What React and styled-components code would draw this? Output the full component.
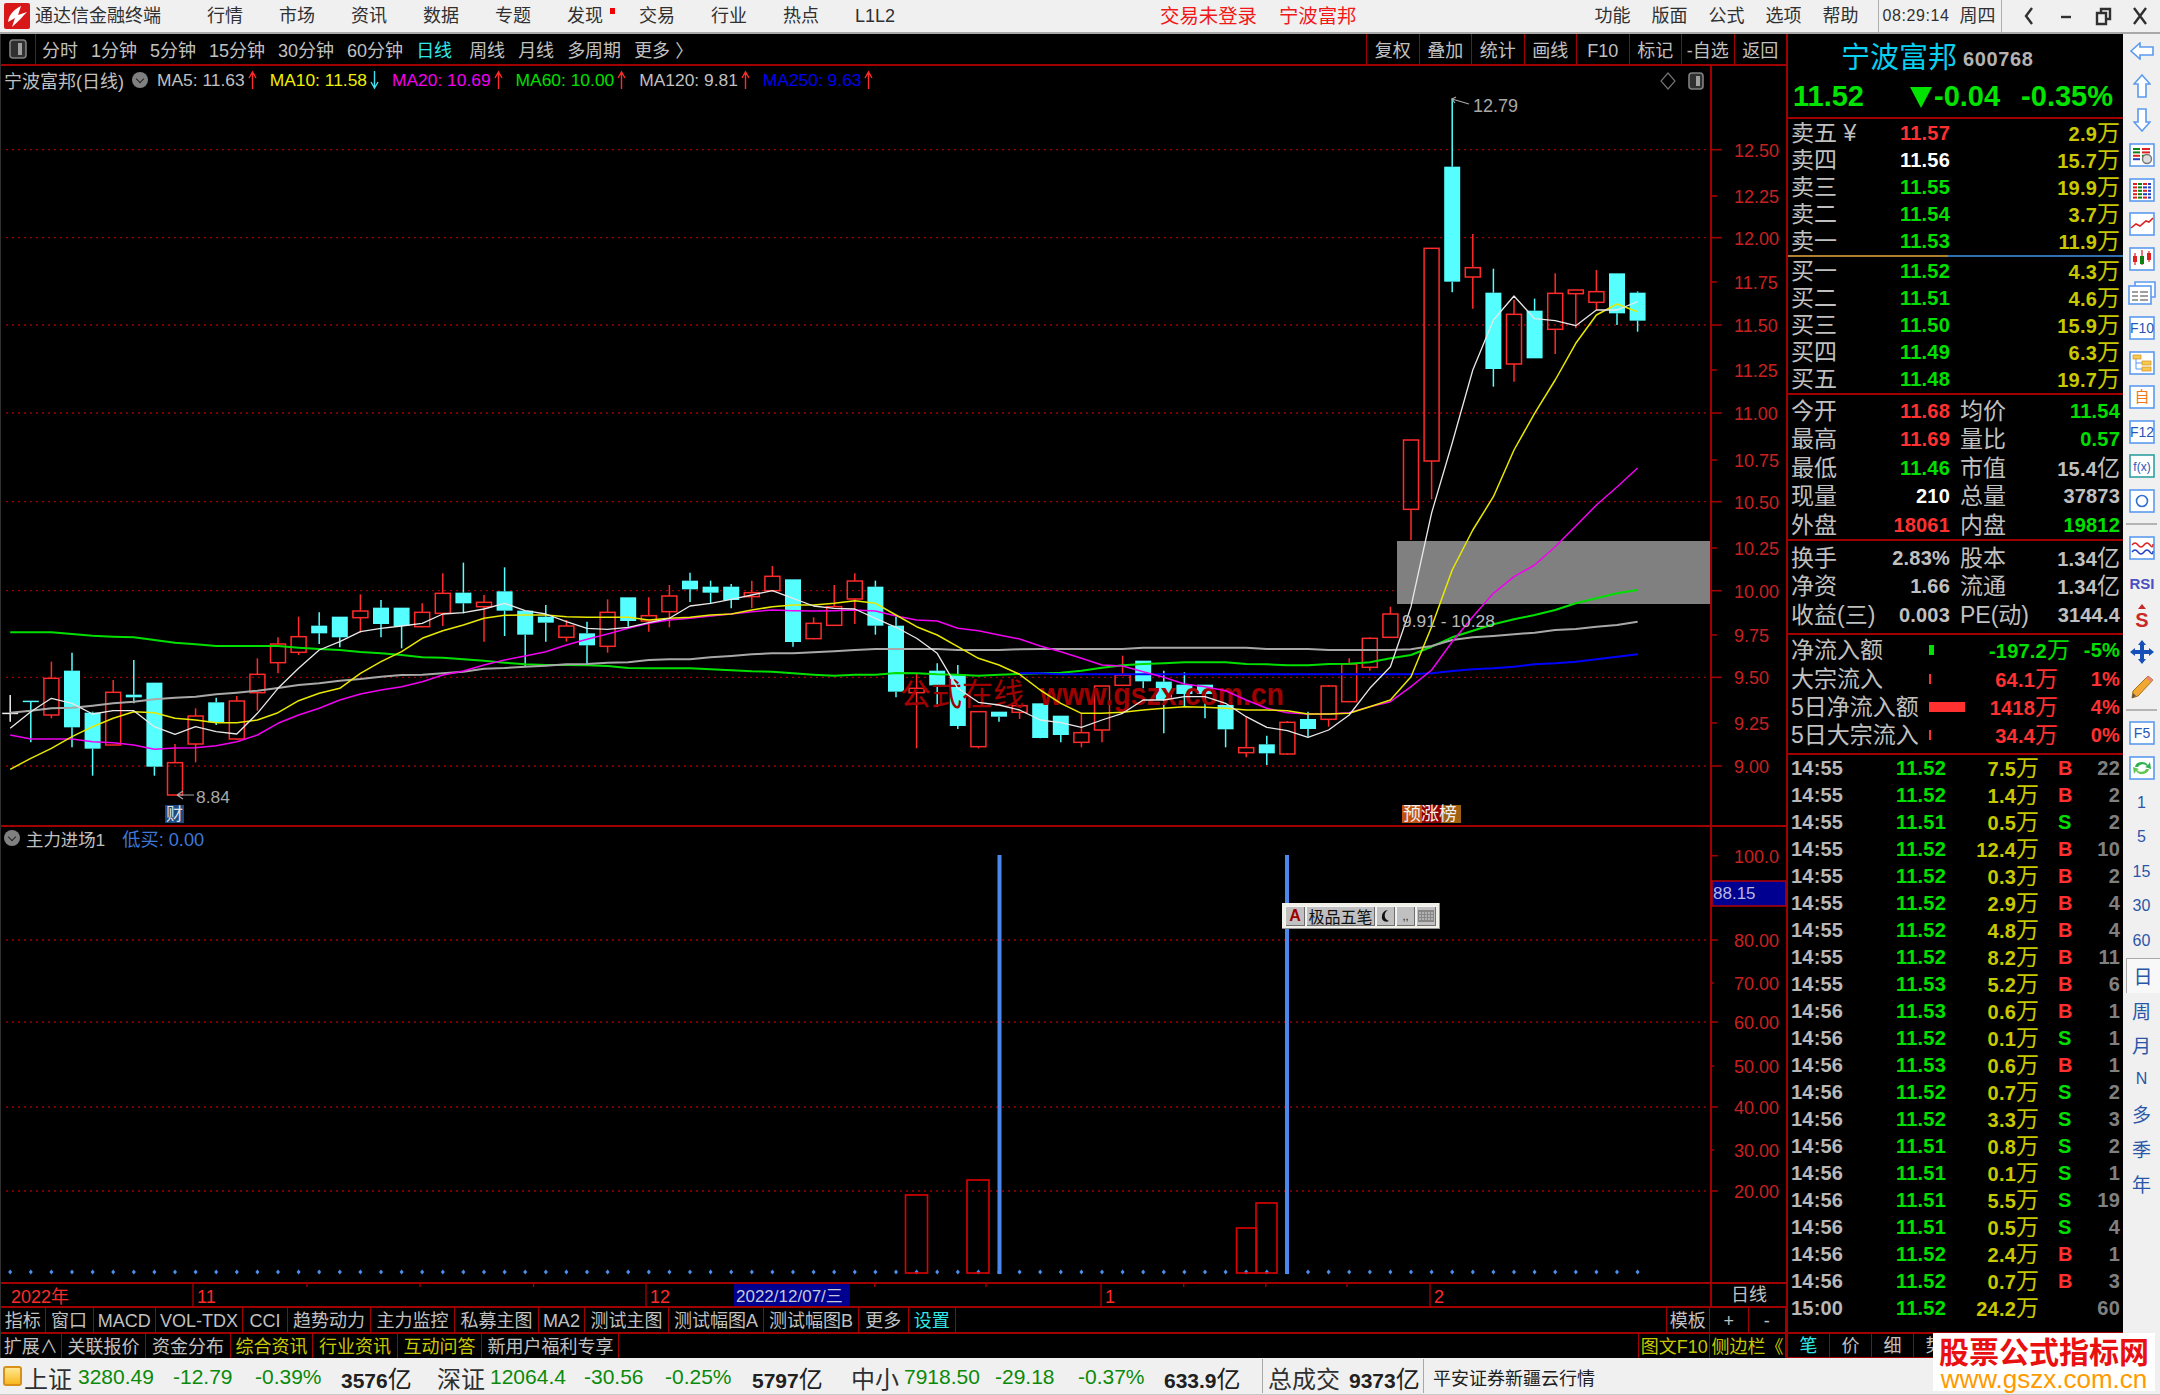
import React from 'react';
import styled, {createGlobalStyle} from 'styled-components';

const RED_LINE = '#a00000';
const GRAY = '#c0c0c0';
const UP = '#ff2a2a';
const DOWN = '#55ffff';
const GREEN = '#00e000';
const YELLOW = '#c8c800';
const FONT = '"Liberation Sans", "Noto Sans CJK SC", sans-serif';

const Global = createGlobalStyle`
  html, body { margin: 0; padding: 0; background: #000; }
  body { font-family: ${FONT}; overflow: hidden; }
  * { box-sizing: border-box; }
`;

const Screen = styled.div`
  position: relative;
  width: 2160px;
  height: 1395px;
  display: flex;
  flex-direction: column;
  overflow: hidden;
`;

/* ---- title bar ---- */

const TitleBar = styled.div`
  height: 34px;
  flex: none;
  display: flex;
  align-items: center;
  background: #f0f0f0;
  border-bottom: 2px solid #a8a8a8;
  color: #303030;
  font-size: 18px;
  line-height: 32px;
  padding-left: 4px;
`;

const AppName = styled.span`
  margin-left: 5px;
  margin-right: 46px;
`;

const Menu = styled.div`
  display: flex;
  gap: 36px;
`;

const MenuItem = styled.span`
  position: relative;
  width: 36px;
  white-space: nowrap;
`;

const RedDot = styled.i`
  position: absolute;
  top: 8px;
  right: -12px;
  width: 5px;
  height: 6px;
  background: #f00000;
`;

const Alert = styled.span`
  color: #f01818;
  font-size: ${p => p.$size}px;
  margin-left: ${p => p.$left}px;
`;

const RightMenu = styled.div`
  display: flex;
  gap: 21px;
  margin-left: 238px;
`;

const Clock = styled.div`
  display: flex;
  align-items: center;
  height: 32px;
  margin-left: 19px;
  padding: 0 5px 0 4px;
  border-left: 1px solid #b0b0b0;
  border-right: 1px solid #b0b0b0;
  gap: 10px;
`;

const ClockTime = styled.span`
  font-size: 16px;
  letter-spacing: 0.6px;
`;

const WinButtons = styled.div`
  display: flex;
  align-items: center;
  margin-left: 18px;
  gap: 19px;
`;

function LogoMark() {
  return (
    <svg width="26" height="26" viewBox="0 0 26 26">
      <rect width="26" height="26" rx="2" fill="#d81818" />
      <path d="M17 3 C9 7 5 12 4 19 L11 15 L8 24 C14 19 19 13 23 9 L14 12 Z" fill="#fff" />
    </svg>
  );
}

function WinGlyph({kind}) {
  return (
    <svg width="18" height="20" viewBox="0 0 18 20" fill="none" stroke="#303030" strokeWidth="2.4">
      {kind === 'back' && <path d="M12 2 L6 10 L12 18" />}
      {kind === 'min' && <path d="M4 11 H14" />}
      {kind === 'max' && <path d="M3 7 H12 V18 H3 Z M7 7 V3 H16 V13 H12" />}
      {kind === 'close' && <path d="M3 2 L15 18 M15 2 L3 18" />}
    </svg>
  );
}

/* ---- main column ---- */

const Body = styled.div`
  flex: 1;
  display: flex;
  min-height: 0;
`;

const MainColumn = styled.div`
  width: 1788px;
  flex: none;
  display: flex;
  flex-direction: column;
  background: #000;
  border-right: 2px solid ${RED_LINE};
  border-left: 1px solid #303030;
`;

const Toolbar = styled.div`
  height: 32px;
  flex: none;
  display: flex;
  align-items: stretch;
  border-bottom: 2px solid ${RED_LINE};
  font-size: 18px;
  line-height: 28px;
  color: ${GRAY};
`;

const ViewToggle = styled.div`
  width: 35px;
  display: flex;
  align-items: center;
  justify-content: center;
  border-right: 1px solid ${RED_LINE};
`;

const PeriodTabs = styled.div`
  display: flex;
  gap: 13px;
  margin-left: 6px;
`;

const PeriodTab = styled.span`
  padding-top: 3px;
  margin-right: ${p => (p.$active ? 4 : 0)}px;
  color: ${p => (p.$active ? '#30e8e8' : GRAY)};
  white-space: nowrap;
`;

const ToolCells = styled.div`
  display: flex;
  margin-left: auto;
`;

const ToolCell = styled.span`
  width: 52.5px;
  padding-top: 3px;
  text-align: center;
  border-left: 1px solid ${RED_LINE};
  white-space: nowrap;
`;

const ChartPane = styled.div`
  position: relative;
  height: ${p => p.$h}px;
  flex: none;
  border-bottom: ${p => (p.$line ? `2px solid ${RED_LINE}` : 'none')};
`;

const Plot = styled.svg`
  display: block;
  font-family: ${FONT};
`;

const Legend = styled.div`
  position: absolute;
  left: 3px;
  top: ${p => p.$top}px;
  display: flex;
  align-items: center;
  height: 22px;
  font-size: 17.4px;
  white-space: nowrap;
  color: ${GRAY};
`;

const LegendName = styled.span`
  font-size: 18px;
`;

const LegendItem = styled.span`
  color: ${p => p.$color};
  font-size: ${p => p.$size || 17.4}px;
  margin-left: ${p => p.$left || 0}px;
  display: inline-flex;
  align-items: center;
  gap: 3px;
`;

const Knob = styled.i`
  display: inline-flex;
  width: 16px;
  height: 16px;
  margin-left: ${p => p.$left || 0}px;
  border-radius: 50%;
  background: #808080;
  align-items: center;
  justify-content: center;
  &::after {
    content: '';
    width: 5px;
    height: 5px;
    margin-top: -3px;
    border-right: 1.5px solid #222;
    border-bottom: 1.5px solid #222;
    transform: rotate(45deg);
  }
`;

const CornerTools = styled.div`
  position: absolute;
  top: 6px;
  right: 82px;
  display: flex;
  align-items: center;
  gap: 12px;
`;

const Ime = styled.div`
  position: absolute;
  left: 1281px;
  top: 76px;
  width: 158px;
  height: 26px;
  display: flex;
  gap: 1px;
  padding: 3px 3px 3px 3px;
  background: #f0f0e8;
  box-shadow: inset -1px -1px 0 #909090;
`;

const ImeKey = styled.span`
  width: ${p => p.$w}px;
  display: flex;
  align-items: center;
  justify-content: center;
  background: #c0c0c0;
  color: ${p => p.$color || '#101010'};
  font-size: ${p => p.$size || 16}px;
  font-weight: ${p => p.$weight || 400};
  box-shadow: inset 1px 1px 0 #f4f4f4, inset -1px -1px 0 #707070;
  white-space: nowrap;
`;

const TimeAxisRow = styled.div`
  height: 24px;
  flex: none;
  display: flex;
  border-top: 2px solid ${RED_LINE};
  color: ${GRAY};
  font-size: 18px;
  line-height: 22px;
`;

const AxisCorner = styled.div`
  width: 76px;
  text-align: center;
  border-left: 2px solid ${RED_LINE};
`;

const TabRow = styled.div`
  height: 26px;
  flex: none;
  display: flex;
  border-top: 2px solid ${RED_LINE};
  font-size: 18px;
  line-height: 22px;
`;

const Tab = styled.span`
  width: ${p => p.$w}px;
  padding-top: 2px;
  text-align: center;
  white-space: nowrap;
  color: ${p => p.$color || GRAY};
  border-right: 1.5px solid ${RED_LINE};
  border-left: ${p => (p.$first ? `1.5px solid ${RED_LINE}` : 'none')};
`;

const Spacer = styled.div`
  flex: 1;
`;

/* ---- right panel ---- */

const QuotePanel = styled.div`
  width: 335px;
  flex: none;
  display: flex;
  flex-direction: column;
  background: #000;
`;

const PanelHead = styled.div`
  height: 85px;
  flex: none;
  border-bottom: 2px solid ${RED_LINE};
`;

const StockTitle = styled.div`
  display: flex;
  align-items: flex-end;
  height: 42px;
  padding-left: 53px;
  gap: 6px;
`;

const StockName = styled.span`
  color: #08d0f0;
  font-size: 29px;
  line-height: 36px;
`;

const StockCode = styled.span`
  color: #b4b4b4;
  font-size: 20px;
  font-weight: 700;
  line-height: 34px;
  letter-spacing: 0.6px;
`;

const PriceLine = styled.div`
  display: flex;
  align-items: center;
  height: 40px;
  padding: 1px 0 0 5px;
  color: #00e400;
  font-size: 29px;
  font-weight: 700;
`;

const DownMark = styled.i`
  width: 0;
  height: 0;
  margin: 2px 2px 0 46px;
  border-left: 11px solid transparent;
  border-right: 11px solid transparent;
  border-top: 21px solid #00e400;
`;

const ChangePct = styled.span`
  margin-left: 21px;
`;

const Section = styled.div`
  flex: none;
  border-bottom: ${p => (p.$plain ? 'none' : `2px solid ${RED_LINE}`)};
  padding-top: ${p => p.$pad || 0}px;
  padding-bottom: ${p => p.$padEnd || 0}px;
`;

const SplitRule = styled.div`
  height: 2px;
  flex: none;
  background: linear-gradient(to right, #b08030 160px, #3070b0 160px);
`;

const Row = styled.div`
  display: grid;
  grid-template-columns: ${p => p.$cols};
  height: ${p => p.$h}px;
  line-height: ${p => p.$h}px;
  padding: 0 3px;
  font-size: 20px;
  font-weight: 700;
  white-space: nowrap;
  letter-spacing: 0.2px;
`;

const Label = styled.span`
  color: ${GRAY};
  font-size: 23px;
  font-weight: 400;
  letter-spacing: 0;
  padding-left: ${p => p.$pad || 0}px;
`;

const Num = styled.span`
  color: ${p => p.$color || GRAY};
  text-align: ${p => p.$align || 'right'};
  padding-left: ${p => p.$pad || 0}px;
`;

const Unit = styled.span`
  font-size: 23px;
  font-weight: 400;
  letter-spacing: 0;
`;

const FlowBar = styled.i`
  display: block;
  width: ${p => p.$w}px;
  height: 10px;
  margin-top: 9px;
  background: ${p => p.$color};
`;

const TradeList = styled.div`
  flex: 1;
`;

const SubTabs = styled.div`
  height: 26px;
  flex: none;
  display: flex;
  border-top: 2px solid ${RED_LINE};
  border-bottom: 1px solid ${RED_LINE};
  font-size: 18px;
  line-height: 25px;
`;

const SubTab = styled.span`
  width: 42px;
  text-align: center;
  color: ${p => p.$color || GRAY};
  border-right: 1.5px solid ${RED_LINE};
`;

/* ---- icon strip ---- */

const SideStrip = styled.div`
  flex: 1;
  display: flex;
  flex-direction: column;
  background: #f0f0f0;
  align-items: stretch;
`;

const SideIcon = styled.div`
  height: 34.6px;
  flex: none;
  display: flex;
  align-items: center;
  justify-content: center;
`;

const SideRule = styled.div`
  height: 2px;
  flex: none;
  margin: 5px 3px 5.4px;
  background: #b4b4b4;
`;

const SideLabel = styled.div`
  height: 34.6px;
  flex: none;
  display: flex;
  align-items: center;
  justify-content: center;
  color: #2a56a8;
  font-size: ${p => (p.$small ? 16 : 19)}px;
  background: ${p => (p.$active ? '#f8f8f8' : 'transparent')};
  box-shadow: ${p => (p.$active ? 'inset 1px 1px 0 #a8a8a8' : 'none')};
  margin-left: ${p => (p.$active ? 3 : 0)}px;
`;

/* ---- status bar ---- */

const StatusBar = styled.div`
  height: 37px;
  flex: none;
  display: flex;
  align-items: center;
  background: #f0f0f0;
  padding-left: 3px;
  font-size: 21px;
  white-space: nowrap;
  border-bottom: 1px solid #c8c8c8;
`;

const StatusBadge = styled.i`
  width: 19px;
  height: 20px;
  margin-right: 2px;
  border: 2px solid #d89018;
  border-radius: 3px;
  background: linear-gradient(#ffe890, #f8b820);
`;

const StatusCell = styled.span`
  flex: none;
  padding-top: 2px;
  width: ${p => p.$w}px;
  color: ${p => p.$color || '#202020'};
  font-size: ${p => p.$size || 21}px;
  font-weight: ${p => p.$weight || 400};
`;

const StatusUnit = styled.span`
  font-size: 24px;
  font-weight: 400;
`;

const StatusSep = styled.i`
  width: 1px;
  height: 34px;
  flex: none;
  margin-right: ${p => p.$gap}px;
  background: #a8a8a8;
`;

const SiteStamp = styled.div`
  position: absolute;
  left: 1933px;
  top: 1333px;
  width: 222px;
  height: 58px;
  padding-top: 4px;
  background: #fff;
  text-align: center;
`;

const StampTitle = styled.div`
  color: #e81010;
  font-size: 30px;
  font-weight: 700;
  line-height: 31px;
  white-space: nowrap;
`;

const StampUrl = styled.div`
  color: #ff9a00;
  font-size: 26px;
  line-height: 22px;
`;

/* ---- chart data: y values are thirds of a pixel measured from page y=540 ---- */

const zy = z => 540 + z / 3;
const xAt = i => 9.2 + i * 20.6;

// kind, high, body top, body bottom, low
const CANDLES = [
  ['w', 465, 518, 522, 545], ['c', 482, 482, 486, 607], ['r', 365, 415, 525, 535], ['c', 338, 392, 562, 622],
  ['c', 515, 518, 626, 707], ['r', 420, 457, 615, 615], ['c', 360, 464, 472, 490], ['c', 428, 428, 680, 707],
  ['r', 612, 668, 765, 765], ['r', 505, 528, 612, 667], ['c', 473, 487, 547, 555], ['r', 468, 483, 597, 600],
  ['r', 355, 403, 458, 512], ['r', 292, 312, 368, 400], ['r', 230, 290, 337, 345], ['c', 217, 257, 280, 312],
  ['c', 230, 230, 292, 322], ['r', 163, 213, 233, 278], ['c', 180, 203, 252, 292], ['c', 203, 203, 258, 325],
  ['r', 190, 217, 260, 262], ['r', 100, 160, 220, 258], ['c', 68, 158, 190, 220], ['r', 165, 187, 200, 305],
  ['c', 82, 154, 212, 288], ['c', 212, 212, 284, 380], ['c', 195, 230, 248, 305], ['r', 240, 258, 292, 305],
  ['c', 245, 280, 316, 372], ['r', 178, 217, 319, 338], ['c', 172, 172, 243, 260], ['r', 172, 227, 243, 275],
  ['r', 135, 168, 215, 262], ['c', 98, 122, 148, 186], ['c', 122, 140, 158, 190], ['c', 132, 140, 180, 205],
  ['r', 122, 158, 170, 205], ['r', 78, 109, 152, 155], ['c', 118, 118, 306, 320], ['r', 232, 250, 296, 298],
  ['r', 135, 200, 256, 258], ['r', 100, 123, 177, 252], ['c', 122, 140, 257, 284], ['c', 230, 257, 455, 472],
  ['r', 400, 445, 458, 625], ['c', 370, 392, 436, 500], ['c', 375, 403, 558, 567], ['r', 515, 515, 620, 625],
  ['c', 515, 515, 530, 545], ['r', 495, 497, 517, 537], ['c', 490, 490, 594, 595], ['c', 527, 527, 585, 607],
  ['r', 520, 578, 607, 622], ['r', 438, 438, 570, 607], ['r', 347, 405, 436, 436], ['c', 362, 362, 424, 445],
  ['c', 392, 425, 480, 580], ['c', 397, 434, 462, 500], ['c', 434, 434, 462, 535], ['c', 495, 495, 568, 622],
  ['r', 530, 623, 638, 652], ['c', 587, 613, 640, 675], ['r', 543, 547, 642, 645], ['c', 515, 537, 567, 590],
  ['r', 435, 438, 538, 560], ['r', 355, 372, 485, 485], ['r', 292, 295, 382, 392], ['r', 200, 222, 292, 292],
  ['r', -300, -300, -92, 0], ['r', -875, -875, -237, -122], ['c', -1325, -1120, -775, -743], ['r', -918, -817, -789, -694],
  ['c', -814, -742, -513, -460], ['r', -720, -677, -528, -475], ['c', -724, -688, -545, -545], ['r', -800, -740, -632, -558],
  ['r', -750, -750, -739, -635], ['r', -810, -745, -713, -690], ['c', -800, -800, -680, -645], ['c', -746, -742, -658, -625],
];

const MA5 = [565, 515, 475, 490, 522, 512, 512, 560, 583, 560, 575, 582, 520, 445, 385, 330, 305, 275, 265, 258, 250, 222, 218, 207, 190, 212, 222, 245, 265, 268, 262, 248, 235, 198, 190, 178, 165, 152, 175, 198, 205, 207, 235, 262,
  295, 340, 445, 487, 495, 510, 540, 548, 562, 540, 520, 480, 480, 470, 470, 490, 530, 562, 572, 592, 570, 525, 445, 380,
  200, -81, -291, -510, -660, -732, -664, -658, -643, -690, -690, -715];

const MA10 = [688, 655, 625, 590, 560, 535, 515, 518, 535, 540, 548, 548, 540, 518, 482, 460, 445, 400, 365, 335, 295, 272, 255, 235, 226, 225, 225, 230, 232, 232, 232, 240, 235, 232, 225, 222, 210, 200, 195, 195, 190, 182, 190, 225,
  260, 285, 320, 355, 375, 403, 450, 490, 520, 520, 517, 510, 505, 500, 502, 505, 510, 510, 512, 522, 522, 520, 500, 480,
  410, 260, 90, -30, -130, -270, -380, -480, -590, -675, -708, -685];

const MA20 = [585, 597, 597, 597, 605, 608, 615, 628, 624, 623, 617, 605, 585, 550, 525, 505, 480, 462, 450, 440, 425, 405, 393, 375, 360, 348, 335, 315, 298, 282, 265, 250, 240, 235, 228, 222, 215, 210, 212, 213, 212, 210, 213, 228,
  240, 243, 265, 272, 285, 297, 318, 335, 355, 375, 378, 395, 412, 432, 440, 452, 480, 505, 518, 522, 522, 518, 500, 485,
  440, 390, 305, 230, 160, 110, 75, 20, -42, -105, -159, -216];

const MA60 = [277, 277, 277, 282, 287, 290, 292, 300, 308, 313, 318, 318, 318, 318, 323, 327, 330, 336, 340, 345, 352, 353, 358, 362, 368, 373, 375, 375, 376, 378, 384, 385, 385, 385, 388, 391, 394, 395, 400, 404, 407, 404, 404, 399,
  400, 403, 404, 407, 404, 402, 400, 398, 392, 383, 376, 372, 370, 367, 367, 367, 372, 373, 376, 376, 372, 371, 367, 355, 345, 320, 292, 272, 253, 238, 225, 210, 190, 175, 160, 150];

const MA120 = [518, 512, 505, 503, 497, 490, 485, 478, 473, 470, 463, 458, 452, 444, 435, 430, 422, 417, 410, 405, 404, 400, 395, 386, 384, 380, 377, 373, 372, 368, 367, 360, 358, 358, 352, 348, 343, 340, 340, 337, 334, 330, 327, 327,
  327, 327, 330, 330, 330, 328, 327, 327, 327, 327, 327, 323, 323, 323, 323, 323, 323, 327, 327, 327, 330, 330, 330, 330, 328, 318, 300, 292, 288, 283, 278, 270, 267, 260, 255, 245];

const MA250_TAIL = [400, 400, ...Array(18).fill(403), 400, 393, 388, 385, 380, 373, 370, 365, 358, 350, 343];

const MA_LINES = [
  {values: MA60, from: 0, color: '#00e000', width: 2},
  {values: MA120, from: 0, color: '#a8a8a8', width: 2},
  {values: MA250_TAIL, from: 49, color: '#0000ff', width: 2},
  {values: MA20, from: 0, color: '#f000f0', width: 1.5},
  {values: MA10, from: 0, color: '#e8e800', width: 1.5},
  {values: MA5, from: 0, color: '#e8e8e8', width: 1.3},
];

const pricePoints = (values, from) =>
  values.map((v, i) => `${xAt(i + from).toFixed(1)},${zy(v).toFixed(1)}`).join(' ');

const PRICE_LABELS = [
  ['12.50', 149.7], ['12.25', 196], ['12.00', 237.7], ['11.75', 282], ['11.50', 325], ['11.25', 370], ['11.00', 413], ['10.75', 460],
  ['10.50', 501.7], ['10.25', 548], ['10.00', 590.7], ['9.75', 635], ['9.50', 677.3], ['9.25', 723], ['9.00', 766],
];

const DOTTED_PRICE = [149.7, 237.7, 325, 413, 501.7, 590.7, 677.3, 766];

function Candle({data, i}) {
  const [kind, high, top, bottom, low] = data;
  const x = xAt(i);
  const color = kind === 'c' ? DOWN : kind === 'w' ? '#f0f0f0' : UP;
  const y1 = zy(top);
  const y2 = zy(bottom);
  return (
    <g stroke={color} strokeWidth="1.5">
      <line x1={x} x2={x} y1={zy(high)} y2={y1} />
      <line x1={x} x2={x} y1={y2} y2={zy(low)} />
      {kind === 'r'
        ? <rect x={x - 7.5} y={y1} width="15" height={y2 - y1} fill="none" />
        : <rect x={x - 8} y={y1} width="16" height={Math.max(y2 - y1, 1.5)} fill={color} stroke="none" />}
    </g>
  );
}

function PriceChart() {
  return (
    <Plot width="1785" height="759" viewBox="0 66 1785 759">
      {DOTTED_PRICE.map(y => (
        <line key={y} x1="5" x2="1710" y1={y} y2={y} stroke={RED_LINE} strokeWidth="1.3" strokeDasharray="2 4" />
      ))}
      <rect x="1396" y="541" width="314" height="63" fill="#808080" />
      {CANDLES.map((c, i) => <Candle key={i} data={c} i={i} />)}
      <text x="899" y="705" fill="#a00000" fontSize="31">公式在线</text>
      <text x="1039" y="705" fill="#a00000" fontSize="31" fontWeight="700" textLength="244" lengthAdjust="spacingAndGlyphs">www.gszx.com.cn</text>
      {MA_LINES.map(m => (
        <polyline key={m.color} points={pricePoints(m.values, m.from)} fill="none" stroke={m.color} strokeWidth={m.width} strokeLinejoin="round" />
      ))}

      <path d="M1451 99 L1468 104 M1451 99 L1455 97 M1451 99 L1454 103" stroke="#a8a8a8" strokeWidth="1.2" fill="none" />
      <text x="1472" y="112" fill="#a8a8a8" fontSize="18">12.79</text>
      <path d="M193 795 H176 M176 795 L182 791 M176 795 L182 799" stroke="#a8a8a8" strokeWidth="1.2" fill="none" />
      <text x="195" y="803" fill="#a8a8a8" fontSize="17.4">8.84</text>
      <text x="1401" y="627" fill="#b8b8b8" fontSize="17.4">9.91 - 10.28</text>

      <rect x="164" y="805" width="19" height="18" fill="#1c4a80" />
      <text x="165" y="820" fill="#e0e0e0" fontSize="17">财</text>
      <rect x="1401" y="805" width="20" height="18" fill="#c05010" />
      <rect x="1421" y="805" width="19" height="18" fill="#900000" />
      <rect x="1440" y="805" width="20" height="18" fill="#a06010" />
      <text x="1402" y="820" fill="#f0f0f0" fontSize="18">预涨榜</text>

      <line x1="1710" x2="1710" y1="66" y2="826" stroke={RED_LINE} strokeWidth="2" />
      {PRICE_LABELS.map(([label, y], i) => (
        <g key={label}>
          <line x1="1710" x2={i % 2 ? 1716 : 1721} y1={y} y2={y} stroke={RED_LINE} strokeWidth="1.6" />
          <text x="1733" y={y + 7} fill="#c82020" fontSize="18">{label}</text>
        </g>
      ))}
    </Plot>
  );
}

const INDICATOR_LABELS = [
  ['100.0', 855.7, true], ['80.00', 940, true], ['70.00', 983, false], ['60.00', 1022, true],
  ['50.00', 1066, false], ['40.00', 1107, true], ['30.00', 1150, false], ['20.00', 1191, true],
];

const SIGNAL_BARS = [[904.5, 1195, 22], [966, 1180, 22], [1235.5, 1228, 20], [1255, 1203, 21]];

function IndicatorChart() {
  return (
    <Plot width="1785" height="455" viewBox="0 827 1785 455">
      {INDICATOR_LABELS.filter(l => l[2] && l[0] !== '100.0').map(([label, y]) => (
        <line key={label} x1="5" x2="1710" y1={y} y2={y} stroke={RED_LINE} strokeWidth="1.3" strokeDasharray="2 4" />
      ))}
      {CANDLES.map((_, i) => (
        <path key={i} d={`M${xAt(i)} 1269.5 l2 2.5 l-2 2.5 l-2 -2.5 Z`} fill="#4a90f0" />
      ))}
      {SIGNAL_BARS.map(([x, y, w]) => (
        <rect key={x} x={x} y={y} width={w} height={1273 - y} fill="none" stroke="#e00000" strokeWidth="1.6" />
      ))}
      <rect x="996.5" y="855" width="4" height="419" fill="#4a88ee" />
      <rect x="1284" y="855" width="4" height="419" fill="#4a88ee" />

      <line x1="1710" x2="1710" y1="827" y2="1282" stroke={RED_LINE} strokeWidth="2" />
      <rect x="1711" y="881" width="74" height="25" fill="#000090" stroke="#c00000" strokeWidth="1.4" />
      <text x="1712" y="899" fill="#b8b8e0" fontSize="17">88.15</text>
      {INDICATOR_LABELS.map(([label, y, long]) => (
        <g key={label}>
          <line x1="1710" x2={long ? 1717 : 1713} y1={y} y2={y} stroke={RED_LINE} strokeWidth="1.6" />
          <text x="1733" y={y + 7} fill="#c82020" fontSize="18">{label}</text>
        </g>
      ))}
    </Plot>
  );
}

const MONTH_TICKS = [[192, '11'], [645, '12'], [1100, '1'], [1429, '2']];
const WEEK_TICKS = [306, 419, 532.5, 873.7, 985, 1182.7, 1264.8, 1346];

function TimeAxis() {
  return (
    <Plot width="1709" height="22" viewBox="0 1284 1709 22">
      <text x="10" y="1303" fill={UP} fontSize="18">2022年</text>
      {MONTH_TICKS.map(([x, label]) => (
        <g key={x}>
          <line x1={x} x2={x} y1="1284" y2="1306" stroke={RED_LINE} strokeWidth="1.4" />
          <text x={x + 4} y="1303" fill={UP} fontSize="18">{label}</text>
        </g>
      ))}
      {WEEK_TICKS.map(x => <line key={x} x1={x} x2={x} y1="1284" y2="1287" stroke={RED_LINE} strokeWidth="1.4" />)}
      <rect x="733" y="1284" width="116" height="22" fill="#000090" />
      <text x="735" y="1302" fill="#c8c8d8" fontSize="17">2022/12/07/三</text>
    </Plot>
  );
}

function MaArrow({down}) {
  return (
    <svg width="9" height="20" viewBox="0 0 9 20" fill="none" stroke={down ? '#40e0f0' : UP} strokeWidth="1.4">
      {down ? <path d="M4.5 1 V18 M1 12 L4.5 18 L8 12" /> : <path d="M4.5 19 V2 M1 8 L4.5 2 L8 8" />}
    </svg>
  );
}

/* ---- quote data ---- */

const ASKS = [
  ['卖五 ¥', '11.57', '#ff3030', '2.9'], ['卖四', '11.56', '#ffffff', '15.7'], ['卖三', '11.55', GREEN, '19.9'],
  ['卖二', '11.54', GREEN, '3.7'], ['卖一', '11.53', GREEN, '11.9'],
];
const BIDS = [
  ['买一', '11.52', GREEN, '4.3'], ['买二', '11.51', GREEN, '4.6'], ['买三', '11.50', GREEN, '15.9'],
  ['买四', '11.49', GREEN, '6.3'], ['买五', '11.48', GREEN, '19.7'],
];
const STATS = [
  ['今开', '11.68', '#ff3030', '均价', '11.54', GREEN], ['最高', '11.69', '#ff3030', '量比', '0.57', GREEN],
  ['最低', '11.46', GREEN, '市值', '15.4', GRAY, '亿'], ['现量', '210', '#fff', '总量', '37873', GRAY],
  ['外盘', '18061', '#ff3030', '内盘', '19812', GREEN],
];
const VALUATION = [
  ['换手', '2.83%', GRAY, '股本', '1.34', GRAY, '亿'], ['净资', '1.66', GRAY, '流通', '1.34', GRAY, '亿'],
  ['收益(三)', '0.003', GRAY, 'PE(动)', '3144.4', GRAY],
];
const FLOWS = [
  ['净流入额', 5, GREEN, '-197.2', '-5%'], ['大宗流入', 1.5, '#ff3030', '64.1', '1%'],
  ['5日净流入额', 36, '#ff3030', '1418', '4%'], ['5日大宗流入', 1.5, '#ff3030', '34.4', '0%'],
];
const TRADES = [
  ['14:55', '11.52', '7.5', 'B', 22], ['14:55', '11.52', '1.4', 'B', 2], ['14:55', '11.51', '0.5', 'S', 2],
  ['14:55', '11.52', '12.4', 'B', 10], ['14:55', '11.52', '0.3', 'B', 2], ['14:55', '11.52', '2.9', 'B', 4],
  ['14:55', '11.52', '4.8', 'B', 4], ['14:55', '11.52', '8.2', 'B', 11], ['14:55', '11.53', '5.2', 'B', 6],
  ['14:56', '11.53', '0.6', 'B', 1], ['14:56', '11.52', '0.1', 'S', 1], ['14:56', '11.53', '0.6', 'B', 1],
  ['14:56', '11.52', '0.7', 'S', 2], ['14:56', '11.52', '3.3', 'S', 3], ['14:56', '11.51', '0.8', 'S', 2],
  ['14:56', '11.51', '0.1', 'S', 1], ['14:56', '11.51', '5.5', 'S', 19], ['14:56', '11.51', '0.5', 'S', 4],
  ['14:56', '11.52', '2.4', 'B', 1], ['14:56', '11.52', '0.7', 'B', 3], ['15:00', '11.52', '24.2', '', 60],
];

const LEVEL_COLS = '100px 59px 1fr';
const STAT_COLS = '100px 59px 60px 1fr';
const FLOW_COLS = '138px 60px 69px 1fr';
const TRADE_COLS = '90px 65px 93px 30px 1fr';

function LevelRows({rows}) {
  return rows.map(([name, price, color, volume]) => (
    <Row key={name} $cols={LEVEL_COLS} $h={27}>
      <Label>{name}</Label>
      <Num $color={color}>{price}</Num>
      <Num $color={YELLOW}>{volume}<Unit>万</Unit></Num>
    </Row>
  ));
}

function StatRows({rows}) {
  return rows.map(([a, av, ac, b, bv, bc, unit]) => (
    <Row key={a} $cols={STAT_COLS} $h={28.4}>
      <Label>{a}</Label>
      <Num $color={ac}>{av}</Num>
      <Label $pad={10}>{b}</Label>
      <Num $color={bc}>{bv}{unit && <Unit>{unit}</Unit>}</Num>
    </Row>
  ));
}

/* ---- side strip icons ---- */

const ICON_BLUE = '#5b9bef';

function BoxIcon({children, stroke = ICON_BLUE}) {
  return (
    <svg width="26" height="24" viewBox="0 0 26 24">
      <rect x="1" y="1" width="24" height="22" fill="#fff" stroke={stroke} strokeWidth="1.6" />
      {children}
    </svg>
  );
}

const BoxText = ({children, color = '#2a56b8', size = 14}) => (
  <text x="13" y="17" textAnchor="middle" fill={color} fontSize={size} fontFamily={FONT}>{children}</text>
);

const Bars = ({x, colors, w = 4}) => colors.map((c, i) => (
  <rect key={i} x={x} y={5 + i * 3.4} width={w} height="2" fill={c} />
));

const SIDE_ICONS = [
  <svg width="24" height="18" viewBox="0 0 24 18"><path d="M1 9 L10 1 V5 H23 V13 H10 V17 Z" fill="#fff" stroke={ICON_BLUE} strokeWidth="1.6" /></svg>,
  <svg width="18" height="24" viewBox="0 0 18 24"><path d="M9 1 L17 10 H13 V23 H5 V10 H1 Z" fill="#fff" stroke={ICON_BLUE} strokeWidth="1.6" /></svg>,
  <svg width="18" height="24" viewBox="0 0 18 24"><path d="M9 23 L17 14 H13 V1 H5 V14 H1 Z" fill="#fff" stroke={ICON_BLUE} strokeWidth="1.6" /></svg>,
  <BoxIcon>
    <Bars x={4} w={7} colors={['#108010', '#108010', '#e02020', '#2040c0']} />
    <Bars x={13} w={8} colors={['#e02020', '#e02020', '#108010']} />
    <circle cx="18" cy="16" r="4.5" fill="#ddd" stroke="#777" strokeWidth="1.4" />
  </BoxIcon>,
  <BoxIcon>
    <Bars x={4} colors={['#e02020', '#e02020', '#e02020', '#e02020', '#e02020']} />
    <Bars x={9} colors={['#108010', '#108010', '#108010', '#108010', '#108010']} />
    <Bars x={14} colors={['#e02020', '#2040c0', '#e02020', '#2040c0', '#e02020']} />
    <Bars x={19} w={3} colors={['#2040c0', '#2040c0', '#2040c0', '#2040c0', '#2040c0']} />
  </BoxIcon>,
  <BoxIcon><path d="M2 16 L7 12 L11 14 L17 9 L20 10 L24 6" fill="none" stroke="#e02020" strokeWidth="1.6" /></BoxIcon>,
  <BoxIcon>
    <path d="M6 6 V18 M13 3 V18 M20 4 V15" stroke="#e02020" strokeWidth="1.2" />
    <rect x="4" y="9" width="4" height="6" fill="#e02020" />
    <rect x="11" y="9" width="4" height="8" fill="#108010" />
    <rect x="18" y="6" width="4" height="7" fill="#e02020" />
  </BoxIcon>,
  <svg width="28" height="24" viewBox="0 0 28 24">
    <path d="M7 5 V1 H27 V16 H23" fill="#fff" stroke={ICON_BLUE} strokeWidth="1.6" />
    <rect x="1" y="5" width="22" height="18" fill="#fff" stroke={ICON_BLUE} strokeWidth="1.6" />
    <path d="M4 11 H10 M12 11 H20 M4 15 H10 M12 15 H20 M4 19 H10 M12 19 H20" stroke="#808080" strokeWidth="1.6" />
  </svg>,
  <BoxIcon><BoxText>F10</BoxText></BoxIcon>,
  <BoxIcon>
    <rect x="4" y="4" width="8" height="4" fill="#f8c850" stroke="#d09020" strokeWidth=".7" />
    <rect x="13" y="10" width="9" height="4" fill="#f8c850" stroke="#d09020" strokeWidth=".7" />
    <rect x="13" y="16" width="9" height="4" fill="#f8c850" stroke="#d09020" strokeWidth=".7" />
    <path d="M7 8 V18 H13 M7 12 H13" fill="none" stroke={ICON_BLUE} />
  </BoxIcon>,
  <BoxIcon><BoxText color="#f07818" size={15}>自</BoxText></BoxIcon>,
  <BoxIcon><BoxText>F12</BoxText></BoxIcon>,
  <BoxIcon stroke="#30a0a0"><BoxText size={12}>f(x)</BoxText></BoxIcon>,
  <BoxIcon><circle cx="13" cy="12" r="5.5" fill="none" stroke="#3070d0" strokeWidth="1.6" /></BoxIcon>,
  'rule',
  <BoxIcon>
    <path d="M3 9 Q6 5 9 9 T15 9 T21 9 T24 8" fill="none" stroke="#e02020" strokeWidth="1.4" />
    <path d="M3 16 Q6 12 9 16 T15 16 T21 16 T24 15" fill="none" stroke="#2040c0" strokeWidth="1.4" />
  </BoxIcon>,
  <svg width="30" height="22" viewBox="0 0 30 22"><text x="15" y="17" textAnchor="middle" fontSize="15" fontWeight="700" fill="#4a50c0" fontFamily={FONT}>RSI</text></svg>,
  <svg width="26" height="32" viewBox="0 0 26 32">
    <text x="13" y="26" textAnchor="middle" fontSize="20" fontWeight="700" fill="#c82828" fontFamily={FONT}>S</text>
    <path d="M13 3 L9 8 H17 Z" fill="#c82828" />
  </svg>,
  <svg width="26" height="26" viewBox="0 0 26 26">
    <path d="M13 1 L17 6 H15 V11 H20 V9 L25 13 L20 17 V15 H15 V20 H17 L13 25 L9 20 H11 V15 H6 V17 L1 13 L6 9 V11 H11 V6 H9 Z" fill="#1450b8" />
  </svg>,
  <svg width="26" height="26" viewBox="0 0 26 26">
    <path d="M19 3 L24 7 L9 23 L3 25 L4 18 Z" fill="#f0a830" stroke="#a87020" />
    <path d="M3 25 L4 20 L7 23 Z" fill="#555" />
    <path d="M19 3 L24 7 L22 9 L17 5 Z" fill="#e88080" />
  </svg>,
  'rule',
  <BoxIcon><BoxText>F5</BoxText></BoxIcon>,
  <BoxIcon>
    <path d="M6 11 A7 6 0 0 1 19 9 L21 6 L22 13 L16 11 L18 10 A5 4 0 0 0 9 11 Z" fill="#30b050" />
    <path d="M20 13 A7 6 0 0 1 7 15 L5 18 L4 11 L10 13 L8 14 A5 4 0 0 0 17 13 Z" fill="#60c850" />
  </BoxIcon>,
];

const STATUS_CELLS = [
  {t: '上证', w: 54, size: 24, color: '#303030'}, {t: '3280.49', w: 95, c: 1}, {t: '-12.79', w: 82, c: 1}, {t: '-0.39%', w: 86, c: 1},
  {t: '3576', u: '亿', w: 96}, {t: '深证', w: 53, size: 24, color: '#303030'}, {t: '12064.4', w: 94, c: 1}, {t: '-30.56', w: 81, c: 1},
  {t: '-0.25%', w: 87, c: 1}, {t: '5797', u: '亿', w: 99}, {t: '中小', w: 53, size: 24, color: '#303030'}, {t: '7918.50', w: 91, c: 1},
  {t: '-29.18', w: 83, c: 1}, {t: '-0.37%', w: 86, c: 1}, {t: '633.9', u: '亿', w: 98},
];

const TAB_ROW_ONE = [
  ['指标', 44.6], ['窗口', 48], ['MACD', 62.5], ['VOL-TDX', 87], ['CCI', 45], ['趋势动力', 83], ['主力监控', 84], ['私募主图', 83.6],
  ['MA2', 46.4], ['测试主图', 84], ['测试幅图A', 95], ['测试幅图B', 95], ['更多', 49.5], ['设置', 47.5, '#30e8e8'],
];
const TAB_ROW_TWO = [
  ['扩展∧', 60.6], ['关联报价', 84.8], ['资金分布', 84.2], ['综合资讯', 82.9, YELLOW], ['行业资讯', 84.2, YELLOW],
  ['互动问答', 84.8, YELLOW], ['新用户福利专享', 137],
];

export default function App() {
  return (
    <Screen>
      <Global />
      <TitleBar>
        <LogoMark />
        <AppName>通达信金融终端</AppName>
        <Menu>
          {['行情', '市场', '资讯', '数据', '专题'].map(m => <MenuItem key={m}>{m}</MenuItem>)}
          <MenuItem>发现<RedDot /></MenuItem>
          {['交易', '行业', '热点', 'L1L2'].map(m => <MenuItem key={m}>{m}</MenuItem>)}
        </Menu>
        <Alert $size={19.4} $left={269}>交易未登录</Alert>
        <Alert $size={19.4} $left={22}>宁波富邦</Alert>
        <RightMenu>
          {['功能', '版面', '公式', '选项', '帮助'].map(m => <span key={m}>{m}</span>)}
        </RightMenu>
        <Clock><ClockTime>08:29:14</ClockTime><span>周四</span></Clock>
        <WinButtons>
          <WinGlyph kind="back" /><WinGlyph kind="min" /><WinGlyph kind="max" /><WinGlyph kind="close" />
        </WinButtons>
      </TitleBar>

      <Body>
        <MainColumn>
          <Toolbar>
            <ViewToggle>
              <svg width="18" height="20" viewBox="0 0 18 20">
                <rect x="1" y="1" width="16" height="18" rx="3" fill="#303030" stroke="#808080" strokeWidth="1.6" />
                <rect x="9" y="4" width="4" height="12" fill="#a0a0a0" />
              </svg>
            </ViewToggle>
            <PeriodTabs>
              {['分时', '1分钟', '5分钟', '15分钟', '30分钟', '60分钟'].map(t => <PeriodTab key={t}>{t}</PeriodTab>)}
              <PeriodTab $active>日线</PeriodTab>
              {['周线', '月线', '多周期', '更多 〉'].map(t => <PeriodTab key={t}>{t}</PeriodTab>)}
            </PeriodTabs>
            <ToolCells>
              {['复权', '叠加', '统计', '画线', 'F10', '标记', '-自选', '返回'].map(t => <ToolCell key={t}>{t}</ToolCell>)}
            </ToolCells>
          </Toolbar>

          <ChartPane $h={761} $line>
            <PriceChart />
            <Legend $top={3}>
              <LegendName>宁波富邦(日线)</LegendName>
              <Knob $left={8} />
              <LegendItem $color={GRAY} $left={9}>MA5: 11.63<MaArrow /></LegendItem>
              <LegendItem $color="#f0f000" $left={13}>MA10: 11.58<MaArrow down /></LegendItem>
              <LegendItem $color="#f000f0" $left={13}>MA20: 10.69<MaArrow /></LegendItem>
              <LegendItem $color="#00e000" $left={13}>MA60: 10.00<MaArrow /></LegendItem>
              <LegendItem $color={GRAY} $left={13}>MA120: 9.81<MaArrow /></LegendItem>
              <LegendItem $color="#0000f0" $left={13}>MA250: 9.63<MaArrow /></LegendItem>
            </Legend>
            <CornerTools>
              <svg width="16" height="18" viewBox="0 0 16 18"><path d="M8 1 L15 9 L8 17 L1 9 Z" fill="none" stroke="#707070" strokeWidth="1.2" /></svg>
              <svg width="16" height="18" viewBox="0 0 16 18">
                <rect x="1" y="1" width="14" height="16" rx="3" fill="#303030" stroke="#808080" strokeWidth="1.6" />
                <rect x="8" y="4" width="4" height="10" fill="#a0a0a0" />
              </svg>
            </CornerTools>
          </ChartPane>

          <ChartPane $h={455}>
            <IndicatorChart />
            <Legend $top={0}>
              <Knob />
              <LegendItem $color={GRAY} $left={6}>主力进场1</LegendItem>
              <LegendItem $color="#3f78d8" $left={17} $size={18.2}>低买: 0.00</LegendItem>
            </Legend>
            <Ime>
              <ImeKey $w={20} $color="#a00000" $weight={700}>A</ImeKey>
              <ImeKey $w={69}>极品五笔</ImeKey>
              <ImeKey $w={19}>
                <svg width="10" height="14" viewBox="0 0 10 14"><path d="M7 1 C3 3 2 10 8 12 C4 14 0 11 1 7 C1 4 4 1 7 1 Z" fill="#111" /></svg>
              </ImeKey>
              <ImeKey $w={19} $size={11}>,,</ImeKey>
              <ImeKey $w={20}>
                <svg width="16" height="14" viewBox="0 0 16 14">
                  <rect x="0" y="1" width="16" height="12" fill="#888" />
                  <path d="M1 4 H15 M1 7 H15 M1 10 H15" stroke="#ddd" strokeDasharray="2 1" />
                </svg>
              </ImeKey>
            </Ime>
          </ChartPane>

          <TimeAxisRow>
            <TimeAxis />
            <AxisCorner>日线</AxisCorner>
          </TimeAxisRow>

          <TabRow>
            {TAB_ROW_ONE.map(([label, w, color]) => <Tab key={label} $w={w} $color={color}>{label}</Tab>)}
            <Spacer />
            <Tab $w={44.3} $first>模板</Tab>
            <Tab $w={38.5}>+</Tab>
            <Tab $w={37.5}>-</Tab>
          </TabRow>

          <TabRow>
            {TAB_ROW_TWO.map(([label, w, color]) => <Tab key={label} $w={w} $color={color}>{label}</Tab>)}
            <Spacer />
            <Tab $w={71.7} $color={YELLOW} $first>图文F10</Tab>
            <Tab $w={76} $color={YELLOW}>侧边栏《</Tab>
          </TabRow>
        </MainColumn>

        <QuotePanel>
          <PanelHead>
            <StockTitle>
              <StockName>宁波富邦</StockName>
              <StockCode>600768</StockCode>
            </StockTitle>
            <PriceLine>
              <span>11.52</span>
              <DownMark />
              <span>-0.04</span>
              <ChangePct>-0.35%</ChangePct>
            </PriceLine>
          </PanelHead>

          <Section $plain $pad={1}><LevelRows rows={ASKS} /></Section>
          <SplitRule />
          <Section $pad={1}><LevelRows rows={BIDS} /></Section>
          <Section $pad={2}><StatRows rows={STATS} /></Section>
          <Section $pad={3} $padEnd={4}><StatRows rows={VALUATION} /></Section>

          <Section $pad={1} $padEnd={3}>
            {FLOWS.map(([name, w, color, value, pct]) => (
              <Row key={name} $cols={FLOW_COLS} $h={28.4}>
                <Label>{name}</Label>
                <span><FlowBar $w={w} $color={color} /></span>
                <Num $color={color}>{value}<Unit>万</Unit></Num>
                <Num $color={color}>{pct}</Num>
              </Row>
            ))}
          </Section>

          <TradeList>
            {TRADES.map(([time, price, volume, side, count], i) => (
              <Row key={i} $cols={TRADE_COLS} $h={27}>
                <Num $align="left" $color="#b8b8b8">{time}</Num>
                <Num $color={GREEN}>{price}</Num>
                <Num $color={YELLOW}>{volume}<Unit>万</Unit></Num>
                <Num $align="left" $pad={19} $color={side === 'B' ? '#ff3030' : GREEN}>{side}</Num>
                <Num $color="#808080">{count}</Num>
              </Row>
            ))}
          </TradeList>

          <SubTabs>
            <SubTab $color="#30e8e8">笔</SubTab>
            <SubTab>价</SubTab>
            <SubTab>细</SubTab>
            <SubTab>势</SubTab>
            <SubTab />
          </SubTabs>
        </QuotePanel>

        <SideStrip>
          {SIDE_ICONS.map((icon, i) => (
            icon === 'rule' ? <SideRule key={i} /> : <SideIcon key={i}>{icon}</SideIcon>
          ))}
          {['1', '5', '15', '30', '60'].map(t => <SideLabel key={t} $small>{t}</SideLabel>)}
          <SideLabel $active>日</SideLabel>
          {['周', '月'].map(t => <SideLabel key={t}>{t}</SideLabel>)}
          <SideLabel $small>N</SideLabel>
          {['多', '季', '年'].map(t => <SideLabel key={t}>{t}</SideLabel>)}
        </SideStrip>
      </Body>

      <StatusBar>
        <StatusBadge />
        {STATUS_CELLS.map(({t, u, w, size, c, color}, i) => (
          <StatusCell key={i} $w={w} $size={size} $color={c ? '#0a8a0a' : color} $weight={u ? 700 : 400}>
            {t}{u && <StatusUnit>{u}</StatusUnit>}
          </StatusCell>
        ))}
        <StatusSep $gap={5} />
        <StatusCell $w={81} $size={24} $color="#303030">总成交</StatusCell>
        <StatusCell $w={74} $weight={700}>9373<StatusUnit>亿</StatusUnit></StatusCell>
        <StatusSep $gap={9} />
        <StatusCell $w={200} $size={18}>平安证券新疆云行情</StatusCell>
      </StatusBar>

      <SiteStamp>
        <StampTitle>股票公式指标网</StampTitle>
        <StampUrl>www.gszx.com.cn</StampUrl>
      </SiteStamp>
    </Screen>
  );
}
